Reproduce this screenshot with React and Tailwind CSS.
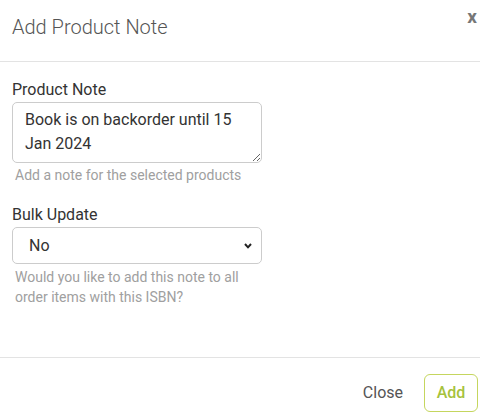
import { useState } from 'react';

// Add Product Note modal
function App() {
  const [note, setNote] = useState('Book is on backorder until 15 Jan 2024');
  const [bulk, setBulk] = useState('No');

  return (
    <div className="w-[480px] h-[418px] bg-white overflow-hidden font-['Roboto',sans-serif]">
      <div className="relative h-[62px] border-b border-[#e3e3e3] px-3 pt-[15px]">
        <h4 className="text-[20px] leading-6 font-light text-[#555]">Add Product Note</h4>
        <button className="absolute right-[3px] top-[5px] text-[19px] font-bold text-[#777] leading-6">x</button>
      </div>

      <div className="px-3 pt-4 h-[295px]">
        <div className="w-[250px] mb-[18px]">
          <label className="block text-[16px] leading-6 text-[#333]">Product Note</label>
          <textarea
            value={note}
            onChange={(e) => setNote(e.target.value)}
            className="block w-[250px] h-[61px] border border-[#ccc] rounded-[5px] px-3 py-[5px] text-[16px] leading-6 text-[#333] resize-y outline-none"
          />
          <p className="mt-[2px] ml-[3px] text-[14px] leading-5 text-[#a0a0a0]">Add a note for the selected products</p>
        </div>

        <div className="w-[250px]">
          <label className="block text-[16px] leading-6 text-[#333]">Bulk Update</label>
          <div className="relative">
            <select
              value={bulk}
              onChange={(e) => setBulk(e.target.value)}
              className="block w-[250px] h-[37px] appearance-none border border-[#ccc] rounded-[5px] pl-4 pr-8 text-[16px] text-[#333] bg-white outline-none"
            >
              <option>No</option>
              <option>Yes</option>
            </select>
            <svg className="absolute right-[10px] top-[16px] pointer-events-none" width="8" height="6" viewBox="0 0 8 6">
              <polyline points="1,1 4,4.3 7,1" fill="none" stroke="#222" strokeWidth="2" />
            </svg>
          </div>
          <p className="mt-[3px] ml-[3px] text-[14px] leading-5 text-[#a0a0a0]">Would you like to add this note to all order items with this ISBN?</p>
        </div>
      </div>

      <div className="border-t border-[#e3e3e3] flex justify-end items-center gap-[9px] pt-4 pr-[2px]">
        <button className="px-3 h-[38px] text-[16px] text-[#555]">Close</button>
        <button className="h-[38px] w-[54px] border border-[#c5d65e] rounded-[6px] text-[16px] font-medium text-[#a6c23c]">Add</button>
      </div>
    </div>
  );
}

export default App;
